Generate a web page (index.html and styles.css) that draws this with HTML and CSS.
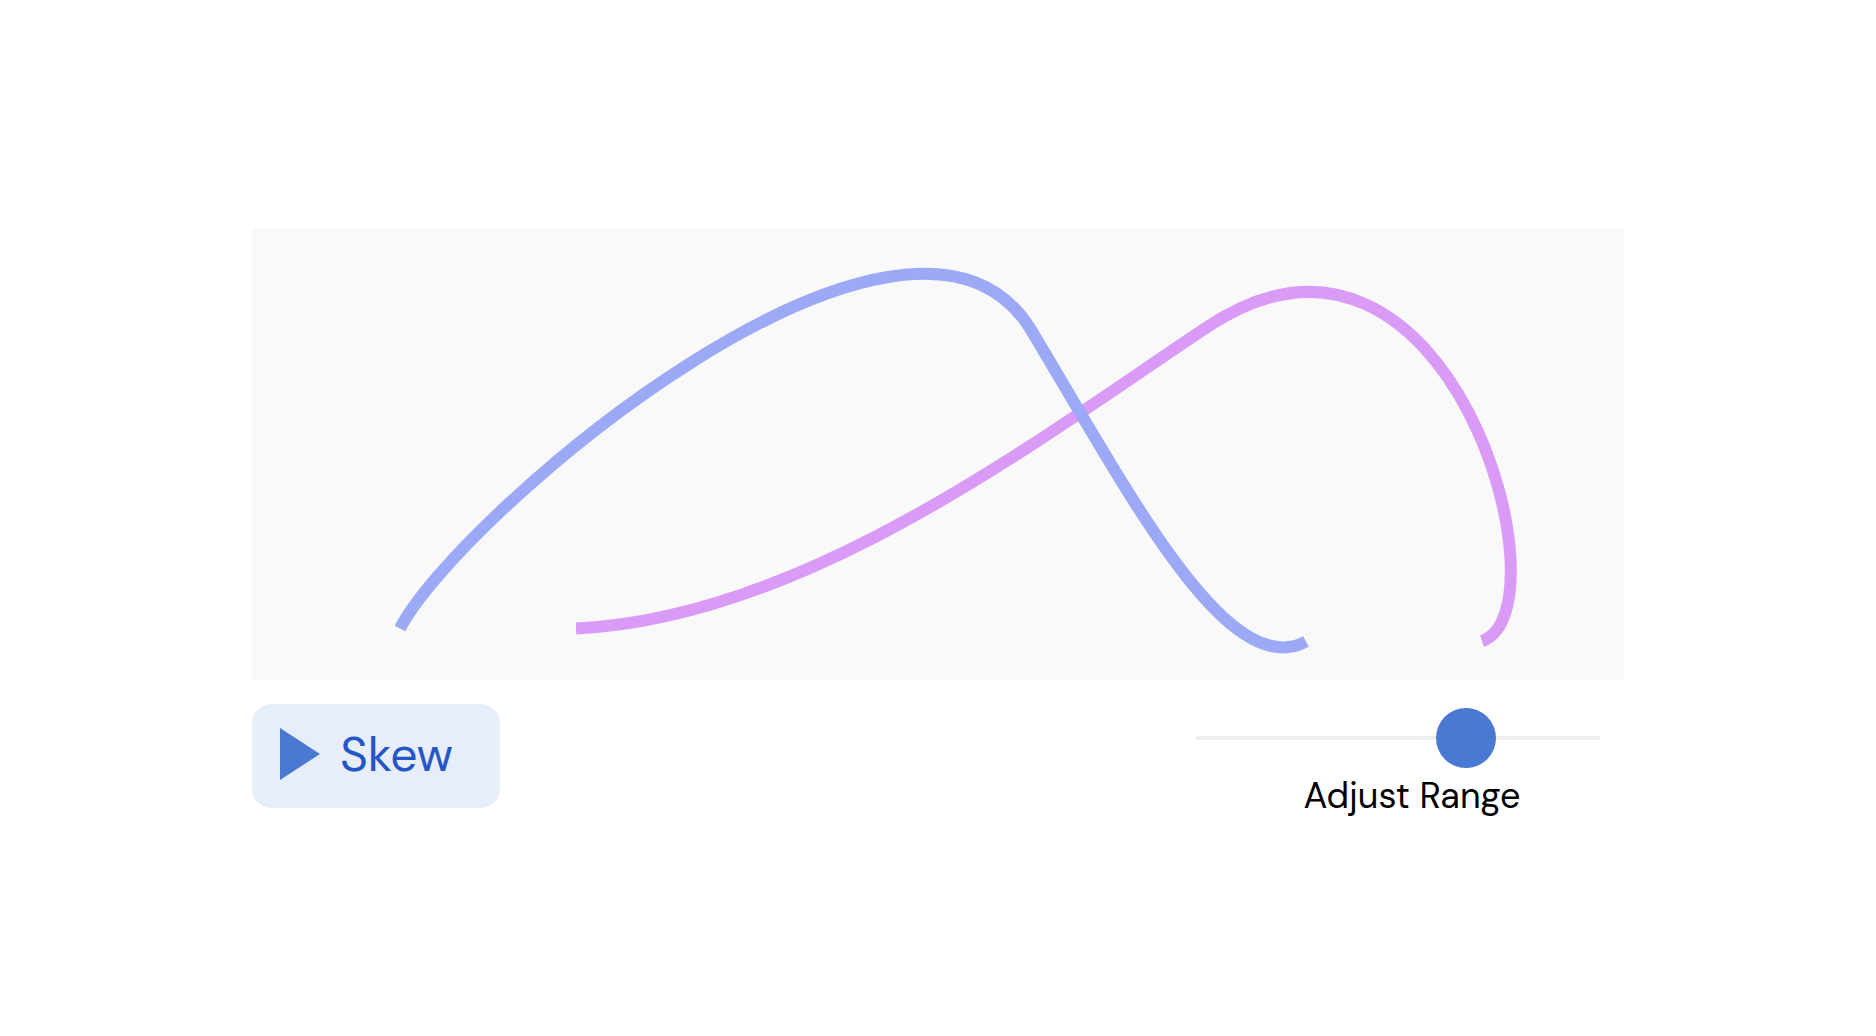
FILE: index.html
```html
<!DOCTYPE html>
<html lang="en">
<head>
<meta charset="utf-8">
<title>Skew</title>
<link rel="stylesheet" href="styles.css">
</head>
<body>
<main class="demo">
  <svg class="chart" viewBox="0 0 1372 452" role="img" aria-label="Two skewed curves">
    <path class="curve curve-right" d="M324 400.500C554 390 788 210 956 98.500C1198 -61 1318 383 1230 413"/>
    <path class="curve curve-left" d="M148 400.500C205 289 655 -96 778.500 101C876 263 975 456 1054 413.500"/>
  </svg>
  <div class="controls">
    <button class="skew" type="button">
      <svg class="play" viewBox="0 0 40 52" aria-hidden="true"><path d="M0 0L40 26L0 52Z"/></svg>
      Skew
    </button>
    <div class="adjust">
      <input class="slider" id="range" type="range" min="0" max="100" step="0.25" value="69.75">
      <label for="range">Adjust Range</label>
    </div>
  </div>
</main>
</body>
</html>
```

FILE: styles.css
```css
body {
  box-sizing: border-box;
  margin: 0;
  min-height: 100vh;
  padding-top: 16px;
  display: flex;
  align-items: center;
  justify-content: center;
  background: #fff;
  color: #000;
  font-family: "DM Sans", Inter, sans-serif;
}

.demo {
  width: 100%;
  max-width: 1372px;
}

.chart {
  display: block;
  width: 100%;
  background: #f9f9f9;
}

.curve {
  fill: none;
  stroke-width: 12;
}

.curve-left {
  stroke: #9ba9f7;
}

.curve-right {
  stroke: #da9bf6;
}

.controls {
  display: flex;
  justify-content: space-between;
  align-items: flex-start;
  padding-top: 24px;
}

.skew {
  display: flex;
  align-items: flex-start;
  gap: 20px;
  width: 248px;
  padding: 24px 28px 26px;
  border: 0;
  border-radius: 20px;
  background: #e7edf9;
  color: #2457c5;
  font: inherit;
  font-size: 48px;
  line-height: 54px;
}

.play {
  width: 40px;
  height: 52px;
  fill: #4a79d1;
}

.adjust {
  display: flex;
  flex-direction: column;
  align-items: center;
  width: 424px;
  padding-top: 4px;
  font-size: 36px;
  line-height: 56px;
}

.slider {
  appearance: none;
  align-self: flex-start;
  width: 404px;
  height: 60px;
  margin: 0 0 0 -4px;
  background: linear-gradient(#eee, #eee) center / 100% 4px no-repeat;
}

.slider::-webkit-slider-thumb {
  appearance: none;
  width: 60px;
  height: 60px;
  border-radius: 50%;
  background: #4a79d1;
}
```
